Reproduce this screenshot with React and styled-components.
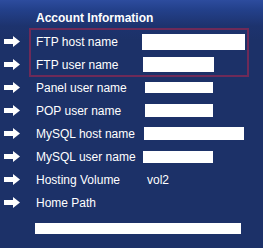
import styled, { createGlobalStyle } from "styled-components";

const GlobalStyle = createGlobalStyle`
  body {
    margin: 0;
    background: #1c3168;
  }
`;

const fields = [
  { label: "FTP host name", width: 103, height: 16, offset: 142 },
  { label: "FTP user name", width: 71, height: 15, offset: 143 },
  { label: "Panel user name", width: 68, height: 11, offset: 145 },
  { label: "POP user name", width: 68, height: 13, offset: 145 },
  { label: "MySQL host name", width: 100, height: 13, offset: 144 },
  { label: "MySQL user name", width: 70, height: 12, offset: 143 },
  { label: "Hosting Volume", value: "vol2" },
  { label: "Home Path" },
];

const Arrow = () => (
  <svg width="16" height="11" viewBox="0 0 16 11">
    <polygon points="0,3 9,3 9,0 16,5.5 9,11 9,8 0,8" fill="#fff" />
  </svg>
);

const Panel = styled.div`
  width: 263px;
  height: 248px;
  overflow: hidden;
  font-family: "Liberation Sans", Arial, sans-serif;
  background: linear-gradient(
    to bottom,
    #2d4c9e 0px,
    #23408a 10px,
    #1d336e 26px,
    #1c3168 40px
  );
`;

const Title = styled.h2`
  margin: 0;
  height: 30px;
  box-sizing: border-box;
  padding: 11px 0 0 36px;
  color: #fff;
  font-size: 12px;
  font-weight: bold;
  line-height: 14px;
`;

const List = styled.div`
  position: relative;
`;

const Row = styled.div`
  display: flex;
  align-items: center;
  height: 23px;
`;

const ArrowCell = styled.div`
  width: 36px;
  padding-left: 4px;
  box-sizing: border-box;
  display: flex;
  align-items: center;
`;

const Label = styled.span`
  width: 106px;
  color: #fff;
  font-size: 12px;
  white-space: nowrap;
`;

const Value = styled.span`
  color: #fff;
  font-size: 12px;
  margin-left: 5px;
`;

const Field = styled.div`
  width: ${(p) => p.$width}px;
  height: ${(p) => p.$height}px;
  margin-left: ${(p) => p.$offset - 142}px;
  background: #fff;
`;

const Highlight = styled.div`
  position: absolute;
  left: 29px;
  top: -2px;
  width: 220px;
  height: 49px;
  box-sizing: border-box;
  border: 2px solid #6e2a58;
  pointer-events: none;
`;

const PathField = styled.div`
  width: 206px;
  height: 11px;
  margin: 9px 0 0 35px;
  background: #fff;
`;

export default function App() {
  return (
    <>
      <GlobalStyle />
      <Panel>
        <Title>Account Information</Title>
        <List>
          <Highlight />
          {fields.map((f) => (
            <Row key={f.label}>
              <ArrowCell>
                <Arrow />
              </ArrowCell>
              <Label>{f.label}</Label>
              {f.value && <Value>{f.value}</Value>}
              {f.width && (
                <Field $width={f.width} $height={f.height} $offset={f.offset} />
              )}
            </Row>
          ))}
        </List>
        <PathField />
      </Panel>
    </>
  );
}
